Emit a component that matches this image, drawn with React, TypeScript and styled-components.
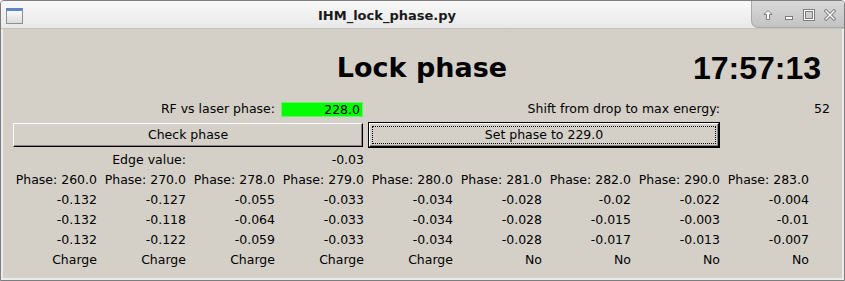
import React from "react";
import styled, { createGlobalStyle } from "styled-components";

// data
const phases = ["260.0", "270.0", "278.0", "279.0", "280.0", "281.0", "282.0", "290.0", "283.0"];
const readings = [
    ["-0.132", "-0.127", "-0.055", "-0.033", "-0.034", "-0.028", "-0.02", "-0.022", "-0.004"],
    ["-0.132", "-0.118", "-0.064", "-0.033", "-0.034", "-0.028", "-0.015", "-0.003", "-0.01"],
    ["-0.132", "-0.122", "-0.059", "-0.033", "-0.034", "-0.028", "-0.017", "-0.013", "-0.007"],
];
const status = ["Charge", "Charge", "Charge", "Charge", "Charge", "No", "No", "No", "No"];

const rows = [phases.map((p) => "Phase: " + p), ...readings, status];

const GlobalStyle = createGlobalStyle`
    html, body {
        margin: 0;
        padding: 0;
        background: #ffffff;
    }
`;

const App = () => {
    return (
        <>
            <GlobalStyle />
            <Window>
                <TitleBar>
                    <AppIcon />
                    <WindowTitle>IHM_lock_phase.py</WindowTitle>
                    <Controls>
                        <svg width="12" height="12" viewBox="0 0 12 12">
                            <path d="M6 1.5 L10 5.5 H7.5 V10.5 H4.5 V5.5 H2 Z" fill="#fff" stroke="#7c7c7c" strokeWidth="1" />
                        </svg>
                        <svg width="12" height="12" viewBox="0 0 12 12">
                            <rect x="2.5" y="7.5" width="7" height="3" fill="#fff" stroke="#7c7c7c" strokeWidth="1" />
                        </svg>
                        <svg width="12" height="12" viewBox="0 0 12 12">
                            <rect x="1.5" y="1.5" width="9" height="9" fill="none" stroke="#7c7c7c" strokeWidth="3" />
                            <rect x="1.5" y="1.5" width="9" height="9" fill="none" stroke="#fff" strokeWidth="1" />
                        </svg>
                        <svg width="12" height="12" viewBox="0 0 12 12">
                            <path d="M2 2 L10 10 M10 2 L2 10" stroke="#7c7c7c" strokeWidth="3.2" strokeLinecap="square" />
                            <path d="M2 2 L10 10 M10 2 L2 10" stroke="#fff" strokeWidth="1.4" strokeLinecap="square" />
                        </svg>
                    </Controls>
                </TitleBar>

                <Body>
                    <Grid>
                        <HeaderRow>
                            <Heading>Lock phase</Heading>
                            <Clock>17:57:13</Clock>
                        </HeaderRow>

                        <Cell $col="1 / 4">RF vs laser phase:</Cell>
                        <PhaseEntry>228.0</PhaseEntry>
                        <Cell $col="5 / 9">Shift from drop to max energy:</Cell>
                        <Cell $col="10">52</Cell>

                        <Button $col="1 / 5">Check phase</Button>
                        <Button $col="5 / 9" $focused>
                            <FocusRing>Set phase to 229.0</FocusRing>
                        </Button>

                        <Cell $col="1 / 3">Edge value:</Cell>
                        <Cell $col="4">-0.03</Cell>

                        {rows.map((row, r) =>
                            row.map((v, i) => (
                                <Cell key={`r${r}-${i}`} $col={i === 0 ? "1" : undefined}>
                                    {v}
                                </Cell>
                            ))
                        )}
                    </Grid>
                </Body>
            </Window>
        </>
    );
};

const Window = styled.div`
    width: 845px;
    height: 281px;
    box-sizing: border-box;
    border: 1px solid #7d7d7d;
    border-radius: 4px 4px 0 0;
    display: flex;
    flex-direction: column;
    overflow: hidden;
    background: #d4d0c8;
`;

const TitleBar = styled.div`
    height: 27px;
    flex: none;
    display: flex;
    align-items: center;
    background: linear-gradient(#f8f8f8, #e9e9e9);
    border-bottom: 1px solid #c4c2bd;
`;

const AppIcon = styled.div`
    width: 17px;
    height: 16px;
    margin-left: 5px;
    margin-top: 2px;
    box-sizing: border-box;
    border: 1px solid #8f8f8f;
    border-top: 3px solid #5e86c4;
    background: linear-gradient(#fbfbfb, #dcdcdc);
    flex: none;
`;

const WindowTitle = styled.div`
    flex: 1;
    text-align: center;
    font: bold 13px "DejaVu Sans", sans-serif;
    color: #1a1a1a;
    padding-top: 2px;
`;

const Controls = styled.div`
    align-self: stretch;
    width: 93px;
    box-sizing: border-box;
    display: flex;
    align-items: center;
    justify-content: space-around;
    padding: 2px 4px 0 6px;
    background: linear-gradient(#d9d9d9, #c3c3c3);
    border-left: 1px solid #a9a9a9;
    border-bottom: 1px solid #a9a9a9;
    border-bottom-left-radius: 7px;
`;

const Body = styled.div`
    flex: 1;
    box-sizing: border-box;
    border-left: 2px solid #ebebeb;
    border-right: 2px solid #ebebeb;
    border-bottom: 2px solid #ebebeb;
    padding-left: 8px;
`;

const Grid = styled.div`
    display: grid;
    grid-template-columns: repeat(9, 89px) 21px;
    grid-template-rows: 70px 22px 29px repeat(6, 20px);
    font: 12.5px "DejaVu Sans", sans-serif;
    color: #000;
`;

const HeaderRow = styled.div`
    grid-column: 1 / -1;
    display: grid;
    grid-template-columns: 1fr auto 1fr;
    align-items: start;
`;

const Heading = styled.div`
    grid-column: 2;
    margin-top: 23px;
    font: bold 27px/32px "DejaVu Sans", sans-serif;
`;

const Clock = styled.div`
    grid-column: 3;
    justify-self: end;
    margin-top: 21px;
    padding-right: 12px;
    font: bold 32px/36px "Liberation Sans", Arial, sans-serif;
`;

type CellProps = {
    $col?: string;
};

const Cell = styled.div<CellProps>`
    grid-column: ${({ $col }) => $col || "auto"};
    align-self: start;
    text-align: right;
    padding-right: 3px;
    line-height: 20px;
    white-space: nowrap;
`;

const PhaseEntry = styled.div`
    grid-column: 4;
    align-self: start;
    margin: 3px 4px 0 3px;
    height: 15px;
    box-sizing: border-box;
    border: 1px solid #66f266;
    background: #00ff00;
    text-align: right;
    padding-right: 2px;
    line-height: 13px;
`;

type ButtonProps = {
    $col: string;
    $focused?: boolean;
};

const Button = styled.div<ButtonProps>`
    grid-column: ${({ $col }) => $col};
    align-self: start;
    margin: 2px 4px 0 2px;
    height: 24px;
    box-sizing: border-box;
    display: flex;
    align-items: stretch;
    justify-content: center;
    padding: ${({ $focused }) => ($focused ? "2px" : "0")};
    background: #d4d0c8;
    border: 1px solid;
    border-color: #ffffff #000000 #000000 #ffffff;
    box-shadow: inset -1px -1px 0 #8a8781;
    ${({ $focused }) => ($focused ? "outline: 1px solid #000; outline-offset: 0;" : "")}
    text-align: center;
    line-height: 21px;
`;

const FocusRing = styled.div`
    flex: 1;
    border: 1px dotted #000;
    line-height: 16px;
    text-align: center;
`;

export default App;
